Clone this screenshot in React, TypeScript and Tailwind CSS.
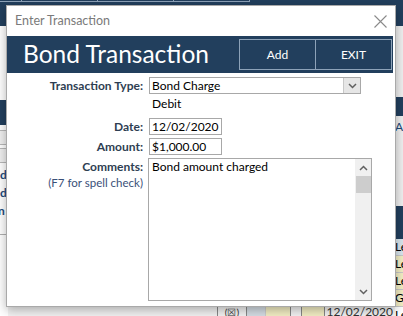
import React from "react";

const font = { fontFamily: 'Lato, "Noto Sans", Arial, sans-serif' };

function Backdrop() {
  return (
    <div className="absolute inset-0 bg-[#f3f3f3]">
      {/* top navy band */}
      <div className="absolute left-0 top-0 w-full h-[26px] bg-[#223f5d]">
        <div className="flex h-[2px]">
          <div className="w-[22px] border-r border-b border-[#8da2b8]" />
          <div className="w-[76px] border-r border-b border-[#8da2b8]" />
          <div className="w-[76px] border-r border-b border-[#8da2b8]" />
          <div className="w-[76px] border-r border-b border-[#8da2b8]" />
        </div>
      </div>
      {/* left strip */}
      <div className="absolute left-0 top-[26px] w-[8px] h-[290px] bg-white overflow-hidden">
        <div className="mt-[74px] h-[25px] bg-[#223f5d]" />
        <div className="mt-[5px] h-[15px] border-y border-[#b8b8b8] bg-[#f0f0f0]" />
        <div className="mt-[3px] h-[15px] border-y border-[#b8b8b8] bg-[#f0f0f0]" />
        <div className="mt-[3px] text-[12px] font-bold text-[#1e4a7a] leading-[18px]">d</div>
        <div className="text-[12px] font-bold text-[#1e4a7a] leading-[18px]">d</div>
        <div className="text-[12px] font-bold text-[#1e4a7a] leading-[18px] -ml-[2px]">n</div>
        <div className="mt-[14px] h-px bg-[#b0b0b0]" />
      </div>
      {/* right strip */}
      <div className="absolute right-0 top-[26px] w-[8px] h-[290px] bg-[#f0f0f0] overflow-hidden">
        <div className="mt-[71px] h-[19px] bg-[#223f5d]" />
        <div className="mt-[3px] text-[12px] text-[#1e4a7a] leading-[16px] whitespace-nowrap">A</div>
        <div className="mt-[71px] h-[33px] bg-[#223f5d]" />
        <div className="bg-[#f3eec4] text-[12px] leading-[16px] text-black whitespace-nowrap">
          <div className="bg-[#d9e6ee] border-b border-[#c8c8c8]">Le</div>
          <div className="border-b border-[#c8c8c8]">Le</div>
          <div className="border-b border-[#c8c8c8]">Le</div>
          <div className="border-b border-[#c8c8c8]">G</div>
          <div className="bg-white">Le</div>
        </div>
      </div>
      {/* bottom row */}
      <div className="absolute left-[200px] top-[306px] w-[195px] h-[10px] flex text-[12px] leading-[12px] text-[#333] overflow-hidden">
        <div className="w-[18px] border-r border-[#888]" />
        <div className="w-[29px] flex justify-center border-r border-[#888] text-[10px]">(☒)</div>
        <div className="w-[19px] bg-[#d5dde4] border-r border-[#ccc]" />
        <div className="w-[25px] bg-[#f3eec4] border-r border-[#888]" />
        <div className="w-[11px] border-r border-[#888]" />
        <div className="w-[23px] bg-[#f3eec4] border-r border-[#888]" />
        <div className="flex-1 text-right pr-[2px]">12/02/2020</div>
      </div>
    </div>
  );
}

function Chevron({ up = false }: { up?: boolean }) {
  return (
    <svg width="9" height="6" viewBox="0 0 9 6" className={up ? "rotate-180" : ""}>
      <path d="M1 1 L4.5 4.5 L8 1" fill="none" stroke="#606060" strokeWidth="1.5" />
    </svg>
  );
}

export default function App() {
  return (
    <div className="relative w-[403px] h-[316px] overflow-hidden" style={font}>
      <Backdrop />
      <div className="absolute left-[6px] top-[5px] w-[390px] h-[302px] bg-white border border-[#a9a9a9] shadow-[0_3px_10px_rgba(0,0,0,0.3)] flex flex-col">
        {/* title bar */}
        <div className="h-[30px] flex items-center justify-between pl-[8px] pr-[8px]">
          <span className="text-[12.5px] text-[#7a7a7a]">Enter Transaction</span>
          <svg width="13" height="13" viewBox="0 0 13 13">
            <path d="M0.5 0.5 L12.5 12.5 M12.5 0.5 L0.5 12.5" stroke="#8a8a8a" strokeWidth="1.1" />
          </svg>
        </div>
        {/* header */}
        <div className="h-[37px] mr-[2px] bg-[#223f5d] flex items-center justify-between pl-[16px] pr-[1px]">
          <span className="text-[24.5px] text-white leading-none">Bond Transaction</span>
          <div className="flex h-[31px]">
            <button className="w-[77px] h-full border border-[#8da2b8] text-white text-[12px]">Add</button>
            <button className="w-[76px] h-full border border-l-0 border-[#8da2b8] text-white text-[12px]">EXIT</button>
          </div>
        </div>
        {/* form */}
        <div className="flex flex-col pt-[4px] text-[12px] text-black">
          <div className="flex h-[17px] items-center">
            <div className="w-[136px] text-right font-bold text-[#2e3e52] leading-none">Transaction Type:</div>
            <div className="ml-[6px] w-[212px] h-[17px] border border-[#a8a8a8] flex items-stretch">
              <div className="flex-1 pl-[2px] leading-[15px]">Bond Charge</div>
              <div className="w-[17px] bg-[#e6e6e6] border-l border-[#c8c8c8] flex items-center justify-center">
                <Chevron />
              </div>
            </div>
          </div>
          <div className="h-[19px] flex items-center pl-[145px] leading-none">Debit</div>
          <div className="h-[5px]" />
          <div className="flex h-[17px] items-center">
            <div className="w-[136px] text-right font-bold text-[#2e3e52] leading-none">Date:</div>
            <div className="ml-[6px] w-[73px] h-[17px] border border-[#a8a8a8] pl-[2px] leading-[15px]">12/02/2020</div>
          </div>
          <div className="h-[3px]" />
          <div className="flex h-[17px] items-center">
            <div className="w-[136px] text-right font-bold text-[#2e3e52] leading-none">Amount:</div>
            <div className="ml-[6px] w-[73px] h-[17px] border border-[#a8a8a8] pl-[2px] leading-[15px]">$1,000.00</div>
          </div>
          <div className="h-[3px]" />
          <div className="flex">
            <div className="w-[136px] text-right text-[#2e3e52] pt-[1px]">
              <div className="font-bold leading-[16px]">Comments:</div>
              <div className="text-[11.5px] leading-[16px] text-[#3a4f78]">(F7 for spell check)</div>
            </div>
            <div className="ml-[5px] w-[224px] h-[143px] border border-[#a8a8a8] flex">
              <div className="flex-1 pl-[3px] leading-[15px]">Bond amount charged</div>
              <div className="w-[16px] bg-[#f0f0f0] flex flex-col items-center">
                <div className="h-[17px] flex items-center justify-center">
                  <Chevron up />
                </div>
                <div className="w-[15px] h-[17px] bg-[#cdcdcd]" />
                <div className="flex-1" />
                <div className="h-[17px] flex items-center justify-center">
                  <Chevron />
                </div>
              </div>
            </div>
          </div>
        </div>
      </div>
    </div>
  );
}
